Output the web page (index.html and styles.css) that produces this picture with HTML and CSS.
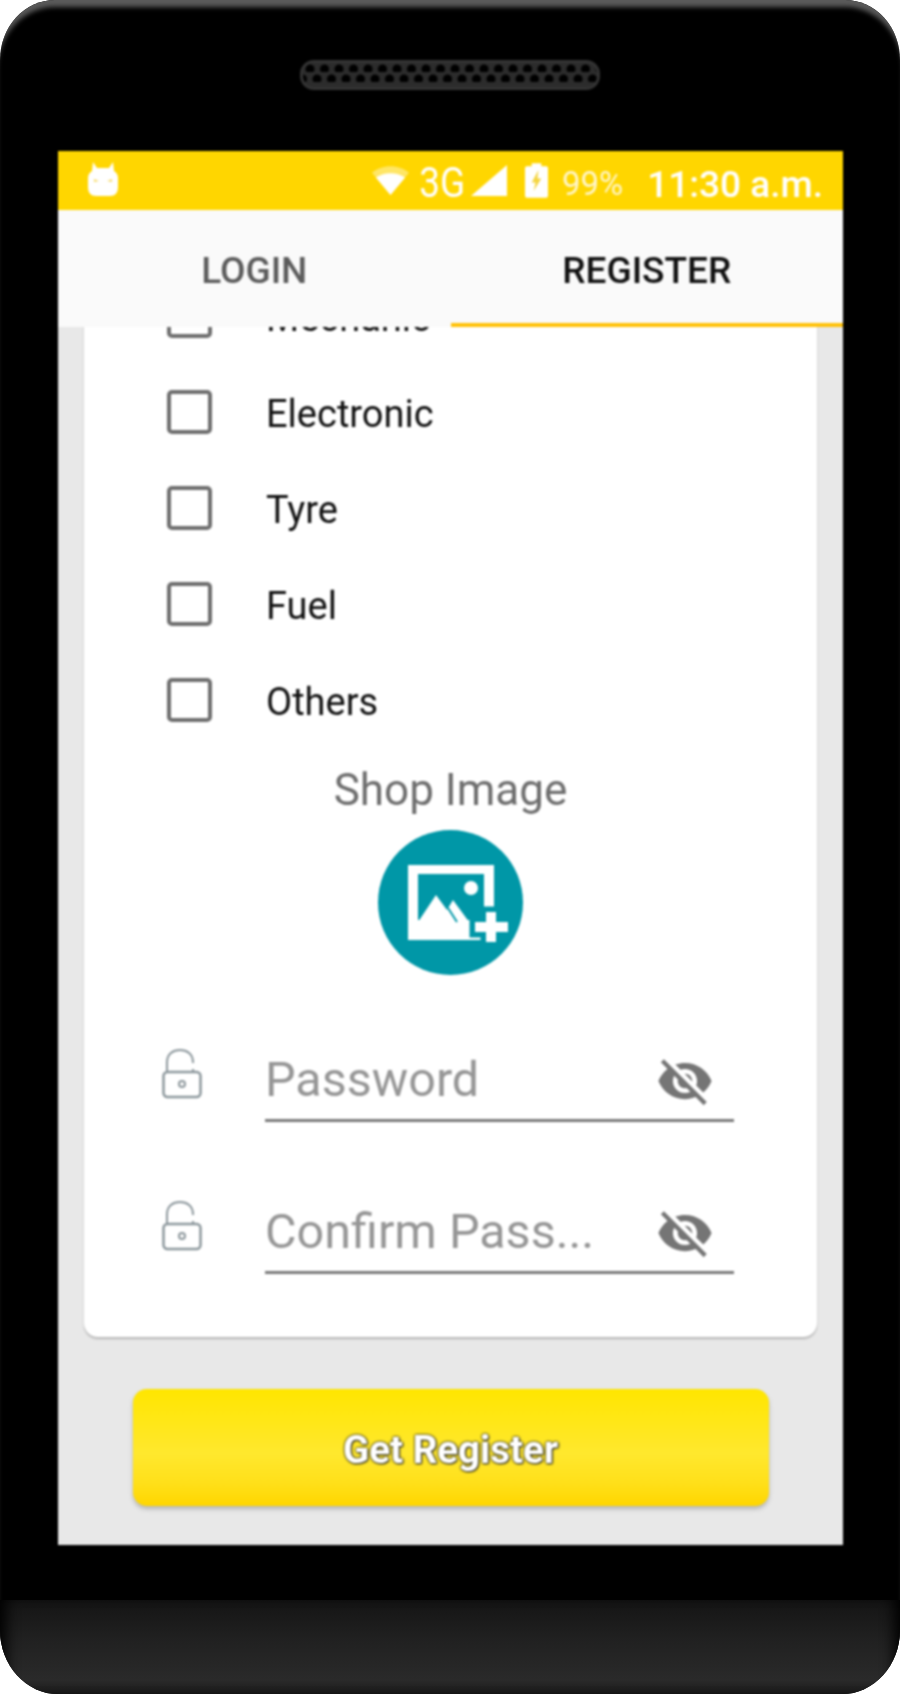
FILE: index.html
```html
<!DOCTYPE html>
<html lang="en">
<head>
    <meta charset="UTF-8">
    <meta name="viewport" content="width=device-width, initial-scale=1.0">
    <title>Register</title>
    <link rel="stylesheet" href="styles.css">
</head>
<body>
    <div class="phone">
        <div class="bezel-top">
            <div class="speaker"></div>
        </div>

        <div class="screen">
            <div class="status-bar">
                <svg class="icon-android" viewBox="0 0 30 34">
                    <path d="M5 0l4 6h12l4-6 1 9c3 2 4 4 4 7v9c0 6-3 9-8 9H8c-5 0-8-3-8-9v-9c0-3 1-5 4-7z" fill="#fff"/>
                    <path d="M6 17l5 2-5 1zM24 17l-5 2 5 1z" fill="#f7dc6a"/>
                </svg>
                <div class="status-right">
                    <svg class="icon-wifi" viewBox="0 0 38 30">
                        <path d="M0 7C10-2 28-2 38 7l-19 23z" fill="#fff" opacity=".4"/>
                        <path d="M4 12c9-6 21-6 30 0L19 30z" fill="#fff"/>
                    </svg>
                    <span class="net-type">3G</span>
                    <svg class="icon-signal" viewBox="0 0 36 31">
                        <path d="M36 0v31H0z" fill="#fff"/>
                    </svg>
                    <svg class="icon-battery" viewBox="0 0 24 36">
                        <path d="M7 0h10v3h5a2 2 0 0 1 2 2v29a2 2 0 0 1-2 2H2a2 2 0 0 1-2-2V5a2 2 0 0 1 2-2h5z" fill="#fff"/>
                        <path d="M14 7l-7 13h4l-2 9 8-13h-4z" fill="#f5d53f"/>
                    </svg>
                    <span class="battery-level">99%</span>
                    <span class="clock">11:30 a.m.</span>
                </div>
            </div>

            <div class="tabs">
                <div class="tab">LOGIN</div>
                <div class="tab tab-active">REGISTER</div>
            </div>

            <div class="content">
                <div class="card">
                    <div class="check-row"><span class="checkbox"></span><span>Mechanic</span></div>
                    <div class="check-row"><span class="checkbox"></span><span>Electronic</span></div>
                    <div class="check-row"><span class="checkbox"></span><span>Tyre</span></div>
                    <div class="check-row"><span class="checkbox"></span><span>Fuel</span></div>
                    <div class="check-row"><span class="checkbox"></span><span>Others</span></div>

                    <div class="shop-title">Shop Image</div>
                    <svg class="shop-image" viewBox="0 0 145 145">
                        <circle cx="72.5" cy="72.5" r="72.5" fill="#0097a7"/>
                        <path fill-rule="evenodd" d="M30 35h86v75H30zM40 44v46h66V44z" fill="#fff"/>
                        <circle cx="93" cy="58" r="7" fill="#fff"/>
                        <path d="M40 92l18-27 11 15 6-10 22 30H40z" fill="#fff"/>
                        <path d="M70 78l9 14" stroke="#0097a7" stroke-width="2" fill="none"/>
                        <path class="plus-halo" d="M108 82h10v10h12v10h-12v10h-10v-10H97V92h11z"/>
                        <path d="M108 82h10v10h12v10h-12v10h-10v-10H97V92h11z" fill="#fff"/>
                    </svg>

                    <div class="field">
                        <svg class="icon-lock" viewBox="0 0 40 50">
                            <path d="M5 23V13C5 5 11 1 18 1s13 4 13 12v1M31 20v3" fill="none" stroke="#8c979c" stroke-width="2"/>
                            <rect x="1.5" y="23" width="37" height="25" rx="4" fill="none" stroke="#8c979c" stroke-width="2.5"/>
                            <circle cx="20" cy="35" r="3" fill="none" stroke="#8c979c" stroke-width="2"/>
                        </svg>
                        <div class="field-input">
                            <span class="field-label">Password</span>
                            <svg class="icon-eye" viewBox="0 0 24 24">
                                <path d="M12 7c2.76 0 5 2.24 5 5 0 .65-.13 1.26-.36 1.83l2.92 2.92c1.51-1.26 2.7-2.89 3.43-4.75-1.73-4.39-6-7.5-11-7.5-1.4 0-2.74.25-3.98.7l2.16 2.16C10.74 7.13 11.35 7 12 7zM2 4.27l2.28 2.28.46.46C3.08 8.3 1.78 10.02 1 12c1.73 4.39 6 7.5 11 7.5 1.55 0 3.03-.3 4.38-.84l.42.42L19.73 22 21 20.73 3.27 3 2 4.27zM7.53 9.8l1.55 1.55c-.05.21-.08.43-.08.65 0 1.66 1.34 3 3 3 .22 0 .44-.03.65-.08l1.55 1.55c-.67.33-1.41.53-2.2.53-2.76 0-5-2.24-5-5 0-.79.2-1.53.53-2.2zm4.31-.78l3.15 3.15.02-.16c0-1.66-1.34-3-3-3l-.17.01z" fill="#757575"/>
                            </svg>
                        </div>
                    </div>

                    <div class="field">
                        <svg class="icon-lock" viewBox="0 0 40 50">
                            <path d="M5 23V13C5 5 11 1 18 1s13 4 13 12v1M31 20v3" fill="none" stroke="#8c979c" stroke-width="2"/>
                            <rect x="1.5" y="23" width="37" height="25" rx="4" fill="none" stroke="#8c979c" stroke-width="2.5"/>
                            <circle cx="20" cy="35" r="3" fill="none" stroke="#8c979c" stroke-width="2"/>
                        </svg>
                        <div class="field-input">
                            <span class="field-label">Confirm Pass...</span>
                            <svg class="icon-eye" viewBox="0 0 24 24">
                                <path d="M12 7c2.76 0 5 2.24 5 5 0 .65-.13 1.26-.36 1.83l2.92 2.92c1.51-1.26 2.7-2.89 3.43-4.75-1.73-4.39-6-7.5-11-7.5-1.4 0-2.74.25-3.98.7l2.16 2.16C10.74 7.13 11.35 7 12 7zM2 4.27l2.28 2.28.46.46C3.08 8.3 1.78 10.02 1 12c1.73 4.39 6 7.5 11 7.5 1.55 0 3.03-.3 4.38-.84l.42.42L19.73 22 21 20.73 3.27 3 2 4.27zM7.53 9.8l1.55 1.55c-.05.21-.08.43-.08.65 0 1.66 1.34 3 3 3 .22 0 .44-.03.65-.08l1.55 1.55c-.67.33-1.41.53-2.2.53-2.76 0-5-2.24-5-5 0-.79.2-1.53.53-2.2zm4.31-.78l3.15 3.15.02-.16c0-1.66-1.34-3-3-3l-.17.01z" fill="#757575"/>
                            </svg>
                        </div>
                    </div>
                </div>

                <button class="register-btn">Get Register</button>
            </div>
        </div>

        <div class="chin"></div>
    </div>
</body>
</html>
```

FILE: styles.css
```css
body {
    margin: 0;
    background-color: #fff;
    font-family: Roboto, "Liberation Sans", sans-serif;
}
.phone {
    width: 900px;
    height: 1694px;
    display: flex;
    flex-direction: column;
    background-color: #000;
    border-radius: 55px 55px 58px 58px / 60px 60px 64px 64px;
    box-shadow: inset 0 10px 5px -3px #5a5a5a;
    overflow: hidden;
}
.bezel-top {
    height: 151px;
    flex: none;
    box-sizing: border-box;
    padding-top: 60px;
    display: flex;
    justify-content: center;
    align-items: flex-start;
}
.speaker {
    width: 300px;
    height: 30px;
    box-sizing: border-box;
    border: 3px solid #333;
    border-radius: 14px;
    background-image:
        radial-gradient(circle at 7px 7px, #000 4px, transparent 5px),
        radial-gradient(circle at 7px 7px, #000 4px, transparent 5px);
    background-size: 14.5px 10px;
    background-position: 0 -1px, 7px 9px;
    background-repeat: repeat-x;
    background-color: #2c2c2c;
    filter: blur(1px);
}
.screen {
    height: 1394px;
    margin: 0 57px 0 58px;
    flex: none;
    display: flex;
    flex-direction: column;
    background-color: #e8e8e8;
    overflow: hidden;
    filter: blur(1px);
}
.status-bar {
    height: 59px;
    flex: none;
    box-sizing: border-box;
    padding: 0 20px 0 30px;
    display: flex;
    justify-content: space-between;
    align-items: center;
    background-color: #ffd600;
    color: #fff;
}
.status-right {
    display: flex;
    align-items: center;
}
.icon-android {
    width: 30px;
    height: 34px;
    margin-bottom: 3px;
}
.icon-wifi {
    width: 37px;
    height: 31px;
    margin-right: 10px;
}
.net-type {
    margin: 4px 3px 0 -3px;
    font-size: 42px;
    transform: scaleX(.88);
}
.icon-signal {
    width: 36px;
    height: 31px;
    margin-right: 18px;
}
.icon-battery {
    width: 23px;
    height: 35px;
    margin-right: 14px;
}
.battery-level {
    margin-top: 6px;
    font-size: 33px;
    opacity: .8;
    margin-right: 24px;
}
.clock {
    margin-top: 8px;
    font-size: 37px;
    font-weight: 500;
}
.tabs {
    height: 117px;
    flex: none;
    display: flex;
    background-color: #fafafa;
    position: relative;
    z-index: 1;
}
.tab {
    flex: 1;
    box-sizing: border-box;
    padding-top: 4px;
    display: flex;
    justify-content: center;
    align-items: center;
    font-size: 37px;
    font-weight: 500;
    color: #5c5c5c;
}
.tab-active {
    color: #111;
    box-shadow: inset 0 -4px #ffc107;
}
.content {
    flex: 1;
    min-height: 0;
}
.card {
    margin: -59px 26px 0;
    padding: 0 83px 66px;
    background-color: #fff;
    border-radius: 0 0 14px 14px;
    box-shadow: 0 2px 2px #b5b5b5;
}
.check-row {
    height: 96px;
    display: flex;
    align-items: center;
    gap: 54px;
    font-size: 38px;
    color: #111;
}
.check-row span:last-child {
    margin-top: 3px;
}
.checkbox {
    width: 45px;
    height: 44px;
    box-sizing: border-box;
    border: 4px solid #6e6e6e;
    border-radius: 5px;
}
.shop-title {
    margin-top: 18px;
    text-align: center;
    font-size: 44px;
    line-height: 48px;
    color: #6e6e6e;
}
.shop-image {
    display: block;
    width: 145px;
    height: 145px;
    margin: 16px auto -8px;
}
.plus-halo {
    fill: #0097a7;
    stroke: #0097a7;
    stroke-width: 11;
}
.field {
    height: 152px;
    display: flex;
    align-items: flex-end;
    gap: 63px;
    margin-left: -5px;
}
.icon-lock {
    width: 40px;
    height: 50px;
    margin-bottom: 20px;
    flex: none;
}
.field-input {
    flex: 1;
    height: 76px;
    display: flex;
    justify-content: space-between;
    align-items: center;
    border-bottom: 3px solid #7a7a7a;
    margin-bottom: -3px;
}
.field-label {
    margin-bottom: 4px;
    font-size: 48.5px;
    color: #969696;
}
.icon-eye {
    width: 58px;
    height: 58px;
    margin-right: 20px;
}
.register-btn {
    display: block;
    width: 636px;
    height: 117px;
    margin: 52px auto 0;
    padding: 3px 0 0;
    border: none;
    border-radius: 14px;
    background-image: linear-gradient(#ffe600 0%, #ffe82e 55%, #ffe01a 80%, #ffd600 100%);
    box-shadow: 0 3px 4px #b5b5b5;
    color: #fff;
    font-family: Roboto, "Liberation Sans", sans-serif;
    font-size: 38.5px;
    font-weight: 700;
    text-shadow: 0 0 3px #333, 1px 1px 2px #333, 0 0 2px #333;
}
.chin {
    flex: 1;
    margin-top: 55px;
    background-image: linear-gradient(#141414 0%, #202020 40%, #2a2a2a 85%, #1a1a1a 100%);
    box-shadow: inset 14px 0 14px -8px #000, inset -14px 0 14px -8px #000;
}
```
